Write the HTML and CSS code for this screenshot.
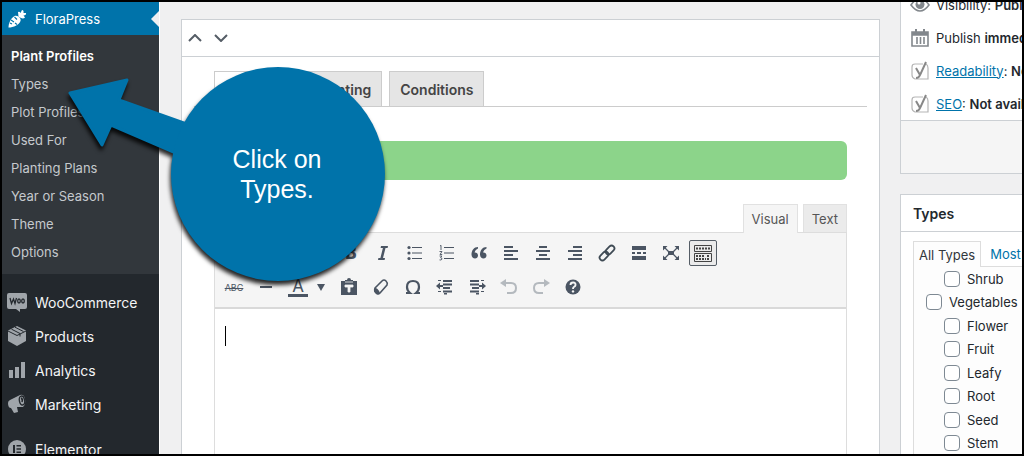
FILE: index.html
```html
<!DOCTYPE html>
<html lang="en">
<head>
<meta charset="utf-8">
<title>Plant Profiles – FloraPress</title>
<link rel="stylesheet" href="styles.css">
</head>
<body>
<div class="page">
  <nav class="menu" aria-label="Main menu">
    <a class="menu-item current" href="#">
      <svg class="menu-icon" viewBox="0 0 20 20" fill="currentColor"><path d="M1.500 18.500C1.500 14 4 9 7.500 7c3-1.500 7 2 6 5-1.500 4-7 6.500-12 6.500z"/><path d="M11.500 7.500L11 3q1.500-1 2.500 1L15 1q2 0 1.500 3L19 4q.5 2-2.500 2.500l1.500 2q-1.500 1.500-4 .5z"/><path d="M4 11l3 2M7.500 8l2.500 2.500M8 14l2 1.500M3 14l2 1" stroke="#0073aa" stroke-width="1.100"/></svg>
      <span>FloraPress</span>
    </a>
    <div class="submenu">
      <a class="active" href="#">Plant Profiles</a>
      <a href="#">Types</a>
      <a href="#">Plot Profiles</a>
      <a href="#">Used For</a>
      <a href="#">Planting Plans</a>
      <a href="#">Year or Season</a>
      <a href="#">Theme</a>
      <a href="#">Options</a>
    </div>
    <div class="menu-group">
      <a class="menu-item" href="#">
        <svg class="menu-icon" viewBox="0 0 20 20"><path fill="#a0a5aa" d="M2 1h16q2 0 2 2v12q0 2-2 2h-5v3l-4-3H2q-2 0-2-2V3q0-2 2-2z"/><path d="M3 6l1.500 5.500L6.500 7l1.500 4.500L9.500 6" fill="none" stroke="#23282d" stroke-width="1.300"/><ellipse cx="12" cy="9" rx="1.300" ry="2" fill="none" stroke="#23282d" stroke-width="1.300"/><ellipse cx="16" cy="9" rx="1.300" ry="2" fill="none" stroke="#23282d" stroke-width="1.300"/></svg>
        <span>WooCommerce</span>
      </a>
      <a class="menu-item" href="#">
        <svg class="menu-icon" viewBox="0 0 20 20"><path fill="#a0a5aa" d="M10 0l9 4.500v10.500L10 20l-9-5V4.500z"/><path d="M1 5l9 4.500L19 5M4.500 3.200l8.500 4.300v3M8 1.200l8.500 4.300" fill="none" stroke="#23282d"/></svg>
        <span>Products</span>
      </a>
      <a class="menu-item" href="#">
        <svg class="menu-icon" viewBox="0 0 20 20" fill="#a0a5aa"><path d="M2 10h4v8H2zM8 7h4v11H8zM14 2h4v16h-4z"/></svg>
        <span>Analytics</span>
      </a>
      <a class="menu-item" href="#">
        <svg class="menu-icon" viewBox="0 0 20 20"><path fill="#a0a5aa" d="M1 9q0-2 2-3l10-5q4-1 5 4t-2 8l-6 0 1 5-4 1-3-5q-3 0-3-5z"/><ellipse cx="15" cy="6.500" rx="2.600" ry="4.500" transform="rotate(-12 15 6.500)" fill="#a0a5aa" stroke="#23282d" stroke-width="1.400"/><path d="M14 4q2 1 1 4" fill="none" stroke="#23282d" stroke-width="1.500"/></svg>
        <span>Marketing</span>
      </a>
    </div>
    <a class="menu-item" href="#">
      <svg class="menu-icon" viewBox="0 0 20 20"><circle cx="10" cy="10" r="9" fill="#a0a5aa"/><path d="M6 6h2v8H6zM9.500 6H14v1.600H9.500zM9.500 9.200H14v1.600H9.500zM9.500 12.400H14V14H9.500z" fill="#23282d"/></svg>
      <span>Elementor</span>
    </a>
  </nav>

  <main class="content">
    <section class="panel profile">
      <header class="panel-head order">
        <button aria-label="Move up"><svg viewBox="0 0 14 8"><path d="M1 7l6-6 6 6"/></svg></button>
        <button aria-label="Move down"><svg viewBox="0 0 14 8"><path d="M1 1l6 6 6-6"/></svg></button>
      </header>
      <div class="profile-body">
        <div class="tabs">
          <button class="tab selected" aria-label="Profile"></button>
          <button class="tab">Planting</button>
          <button class="tab">Conditions</button>
        </div>
        <div class="sheet">
          <div class="banner"></div>
          <div class="modes">
            <button class="mode on">Visual</button>
            <button class="mode">Text</button>
          </div>
          <div class="editor">
            <div class="toolbar">
              <div class="tools">
                <select class="format" aria-label="Format"><option></option></select>
                <button class="tool bold" aria-label="Bold">B</button>
                <button class="tool" aria-label="Italic"><svg viewBox="0 0 20 20"><path d="M8 3h7l-.4 2h-2.100l-2.500 10h2l-.4 2H5l.4-2h2l2.500-10H7.600z"/></svg></button>
                <button class="tool" aria-label="Bulleted list"><svg viewBox="0 0 20 20"><circle cx="4" cy="4.500" r="1.600"/><circle cx="4" cy="10" r="1.600"/><circle cx="4" cy="15.500" r="1.600"/><path d="M7 4h10v1H7zM7 9.500h10v1H7zM7 15h10v1H7z"/></svg></button>
                <button class="tool" aria-label="Numbered list"><svg viewBox="0 0 20 20"><path d="M7 4h10v1H7zM7 9.500h10v1H7zM7 15h10v1H7z"/><path d="M3 3l1-.7V7M2.500 8.500H5L3 11.500h2.200M2.500 13h2.300l-1.200 1.700q1.600 0 1.300 1.400t-2.400.8" fill="none" stroke="#4b5563" stroke-width=".9"/></svg></button>
                <button class="tool" aria-label="Quote"><svg viewBox="0 0 20 20"><path d="M9 4C5 4 2.500 7.500 2.500 11.500c0 5 6.500 5 6.500 1 0-2-1.500-3.200-3.400-3C5.900 7.500 7.500 6.200 9 5.500zM17.500 4C13.500 4 11 7.500 11 11.500c0 5 6.500 5 6.500 1 0-2-1.500-3.200-3.400-3 .3-2 1.900-3.300 3.400-4z"/></svg></button>
                <button class="tool" aria-label="Align left"><svg viewBox="0 0 20 20"><path d="M3 3h9v2H3zM3 7h14v2H3zM3 11h9v2H3zM3 15h14v2H3z"/></svg></button>
                <button class="tool" aria-label="Align center"><svg viewBox="0 0 20 20"><path d="M6 3h8v2H6zM3 7h14v2H3zM6 11h8v2H6zM3 15h14v2H3z"/></svg></button>
                <button class="tool" aria-label="Align right"><svg viewBox="0 0 20 20"><path d="M8 3h9v2H8zM3 7h14v2H3zM8 11h9v2H8zM3 15h14v2H3z"/></svg></button>
                <button class="tool" aria-label="Link"><svg viewBox="0 0 20 20"><g fill="none" stroke="#3f4a54" stroke-width="1.800"><rect x="8" y="4.200" width="10" height="5.600" rx="2.800" transform="rotate(-45 13 7)"/><rect x="2" y="10.200" width="10" height="5.600" rx="2.800" transform="rotate(-45 7 13)"/></g></svg></button>
                <button class="tool" aria-label="Read more"><svg viewBox="0 0 20 20"><path d="M3 3h14v4H3zM3 9h3v2H3zM8 9h4v2H8zM14 9h3v2h-3zM3 13h14v4H3z"/></svg></button>
                <button class="tool" aria-label="Fullscreen"><svg viewBox="0 0 20 20"><path d="M7 8h6v4H7zM2 3h4.500L2 7.500zM18 3v4.500L13.500 3zM2 17v-4.500L6.500 17zM18 17h-4.500l4.500-4.500z"/><path d="M3 4l5 5M17 4l-5 5M3 16l5-5M17 16l-5-5" stroke="#4b5563" stroke-width="1.300"/></svg></button>
                <button class="tool pressed" aria-label="Toolbar toggle" aria-pressed="true"><svg viewBox="0 0 20 20"><path d="M1.500 2.500h17v6h-17zM1.500 10.500h17v8h-17z" fill="none" stroke="#444"/><path d="M3 5.500h14M3 13h9M14 13h3M3 16h2M6 16h7M14 16h3" stroke="#444" stroke-width="2" stroke-dasharray="2 1"/></svg></button>
              </div>
              <div class="tools">
                <button class="tool strike" aria-label="Strikethrough">ABC</button>
                <button class="tool" aria-label="Horizontal line"><svg viewBox="0 0 20 20"><path d="M4 9h12v2H4z"/></svg></button>
                <button class="tool color" aria-label="Text color">A</button>
                <button class="tool more" aria-label="More colors"><svg viewBox="0 0 10 10"><path d="M1 2h8L5 9z"/></svg></button>
                <button class="tool" aria-label="Paste as text"><svg viewBox="0 0 20 20"><path d="M2 4h4V3h2q0-2 2-2t2 2h2v1h4v14H2z"/><path d="M6 5h8M6 8h8v2h-3v5H9v-5H6z" fill="#f5f5f5" stroke="#f5f5f5" stroke-width=".8"/></svg></button>
                <button class="tool" aria-label="Clear formatting"><svg viewBox="0 0 20 20"><path d="M4 11l7-7q2-2 4 0t1 4l-7 8q-2 2-4 0t-1-5z" fill="none" stroke="#4b5563" stroke-width="1.600"/><path d="M4 11q3 0 5 5l-2 1.500-4-3z"/></svg></button>
                <button class="tool" aria-label="Special character"><svg viewBox="0 0 20 20"><path d="M3 16h4q-3-2.500-3-6 0-6 6-6t6 6q0 3.500-3 6h4" fill="none" stroke="#4b5563" stroke-width="2.200"/></svg></button>
                <button class="tool" aria-label="Decrease indent"><svg viewBox="0 0 20 20"><path d="M3 3h3v1H3zM8 3h9v2H8zM8 6.500h9v2H8zM8 10h7v2H8zM3 14h3v1H3zM8 13.500h9v2H8zM9 16h3v1.500H9zM1 9l4-3.500v2.500h3v2H5v2.500z"/></svg></button>
                <button class="tool" aria-label="Increase indent"><svg viewBox="0 0 20 20"><path d="M14 3h3v1h-3zM3 3h9v2H3zM3 6.500h9v2H3zM5 10h7v2H5zM14 14h3v1h-3zM3 13.500h9v2H3zM9 16h3v1.500H9zM19 9l-4-3.500v2.500h-3v2h3v2.500z"/></svg></button>
                <button class="tool off" aria-label="Undo"><svg viewBox="0 0 20 20"><path d="M1 6l6-4v8z"/><path d="M6 6h6q5 0 5 5t-5 5H8" fill="none" stroke="#b4b9be" stroke-width="2"/></svg></button>
                <button class="tool off" aria-label="Redo"><svg viewBox="0 0 20 20"><path d="M19 6l-6-4v8z"/><path d="M14 6H8q-5 0-5 5t5 5h4" fill="none" stroke="#b4b9be" stroke-width="2"/></svg></button>
                <button class="tool" aria-label="Help"><svg viewBox="0 0 20 20"><circle cx="10" cy="10" r="7.500"/><path d="M7.500 8q0-2.500 2.600-2.500T12.500 8q0 1-1.300 1.800T10 12" fill="none" stroke="#f5f5f5" stroke-width="1.900"/><circle cx="10" cy="14.400" r="1.200" fill="#f5f5f5"/></svg></button>
              </div>
            </div>
            <div class="writing" contenteditable="true" role="textbox" aria-label="Content"><span class="caret"></span></div>
          </div>
        </div>
      </div>
    </section>

    <aside class="side">
      <section class="panel publish">
        <ul class="facts">
          <li><svg viewBox="0 0 20 20"><path d="M1 10q9-13 18 0-9 12-18 0z" fill="none" stroke="#82878c" stroke-width="1.600"/><circle cx="10" cy="9.500" r="4.500" fill="#82878c"/><circle cx="9" cy="8" r="1.500" fill="#fff"/></svg><span>Visibility: <b>Public</b></span></li>
          <li><svg viewBox="0 0 20 20"><path d="M2 4h16v14H2zM2 7h16M7 9v7M10.500 9v7M14 9v7" fill="none" stroke="#82878c" stroke-width="1.600"/><path d="M2 4h16v3H2zM5 1h2v4H5zM13 1h2v4h-2z" fill="#82878c"/></svg><span>Publish <b>immediately</b></span></li>
          <li><svg viewBox="0 0 20 20"><path d="M13 3H5Q2 3 2 6v8q0 3 3 4h13V7q0-3-2-4" fill="none" stroke="#b5b5b5" stroke-width="1.200"/><path d="M6 7l4 7M16 1l-6 13q-1 3-4 3" fill="none" stroke="#888" stroke-width="2"/></svg><span><a href="#">Readability</a>: <b>Not available</b></span></li>
          <li><svg viewBox="0 0 20 20"><path d="M13 3H5Q2 3 2 6v8q0 3 3 4h13V7q0-3-2-4" fill="none" stroke="#b5b5b5" stroke-width="1.200"/><path d="M6 7l4 7M16 1l-6 13q-1 3-4 3" fill="none" stroke="#888" stroke-width="2"/></svg><span><a href="#">SEO</a>: <b>Not available</b></span></li>
        </ul>
        <div class="actions"></div>
      </section>
      <section class="panel types">
        <h2 class="panel-head">Types</h2>
        <div class="types-body">
          <div class="type-tabs"><button class="type-tab on">All Types</button><button class="type-tab">Most Used</button></div>
          <ul class="checks">
            <li class="child"><label><input type="checkbox">Shrub</label></li>
            <li><label><input type="checkbox">Vegetables</label></li>
            <li class="child"><label><input type="checkbox">Flower</label></li>
            <li class="child"><label><input type="checkbox">Fruit</label></li>
            <li class="child"><label><input type="checkbox">Leafy</label></li>
            <li class="child"><label><input type="checkbox">Root</label></li>
            <li class="child"><label><input type="checkbox">Seed</label></li>
            <li class="child"><label><input type="checkbox">Stem</label></li>
          </ul>
        </div>
      </section>
    </aside>
  </main>

  <div class="callout">
    <svg class="callout-shape" viewBox="0 0 350 250" fill="#0073aa"><path d="M20 43l57-13-8 20 76 27-19 26-65-28-9 20z" stroke="#0073aa" stroke-width="3" stroke-linejoin="round"/><circle cx="228" cy="124" r="107"/></svg>
    <p class="callout-text">Click on<br>Types.</p>
  </div>
</div>
</body>
</html>
```
FILE: styles.css
```css
* { box-sizing: border-box; }
body { margin: 0; font-family: Inter, "Noto Sans", sans-serif; font-size: 13px; color: #23282d; }
button { font: inherit; color: inherit; margin: 0; padding: 0; border: 0; background: none; }
ul, h2, p { margin: 0; padding: 0; list-style: none; }

.page { position: relative; display: flex; height: 100vh; border: 2px solid #000; overflow: hidden; background: #f0f0f1; }

/* Left menu */
.menu { flex: none; width: 158px; background: #23282d; border-right: 1px solid #fff; }
.menu-item { display: flex; align-items: center; gap: 8px; height: 34px; padding-left: 5px; color: #f4f5f6; font-size: 14px; text-decoration: none; }
.menu-icon { flex: none; width: 20px; height: 20px; }
.menu-item.current { height: 33px; background: #0073aa; color: #fff; font-size: 13px; }
.menu-item.current::after { content: ""; margin-left: auto; border: 8px solid transparent; border-left: 0; border-right-color: #f0f0f1; }
.submenu { display: flex; flex-direction: column; padding: 7px 0 8px 9px; background: #32373c; }
.submenu a { line-height: 28px; color: #c5c9cd; text-decoration: none; white-space: nowrap; }
.submenu .active { color: #fff; font-weight: 600; }
.menu-group { padding: 11px 0; }

/* Panels */
.content { flex: 1; min-width: 0; display: flex; gap: 20px; padding-left: 21px; }
.panel { border: 1px solid #ccd0d4; background: #fff; }
.panel-head { display: flex; align-items: center; height: 37px; border-bottom: 1px solid #ccd0d4; }
.profile { flex: 1; min-width: 0; display: flex; flex-direction: column; margin-top: 17px; border-bottom: 0; }
.order { gap: 12px; padding-left: 6px; }
.order button { display: flex; }
.order svg { width: 14px; height: 8px; fill: none; stroke: #555d66; stroke-width: 2; }
.profile-body { flex: 1; display: flex; flex-direction: column; padding: 14px 12px 0; }
.tabs { display: flex; gap: 7px; padding: 0 20px; border-bottom: 1px solid #ccc; }
.tab { height: 35px; padding: 0 10px; border: 1px solid #ccc; border-bottom: 0; background: #e5e5e5; font-size: 14px; font-weight: 600; color: #444; }
.tab.selected { width: 84px; background: #fff; }
.sheet { flex: 1; display: flex; flex-direction: column; padding: 34px 20px 0; }
.banner { height: 39px; border-radius: 6px; background: #8cd48a; }

/* Editor */
.modes { display: flex; justify-content: flex-end; gap: 5px; margin-top: 24px; }
.mode { height: 28px; padding: 0 8px; border: 1px solid #e1e1e1; border-bottom: 0; background: #ebebeb; color: #555; }
.mode.on { height: 29px; margin-bottom: -1px; background: #f5f5f5; z-index: 1; }
.editor { flex: 1; display: flex; flex-direction: column; border: 1px solid #ddd; border-bottom: 0; }
.toolbar { display: flex; flex-direction: column; gap: 6px; padding: 6px 5px; background: #f5f5f5; border-bottom: 2px solid #d9d9d9; }
.tools { display: flex; align-items: center; gap: 4px; height: 28px; }
.tool { display: flex; flex: none; align-items: center; justify-content: center; width: 28px; height: 26px; color: #4b5563; }
.tool svg { width: 20px; height: 20px; fill: #4b5563; }
.tool.off svg { fill: #b4b9be; }
.tool.pressed { border: 1px solid #555d66; border-radius: 2px; background: #ebebeb; }
.bold { font-weight: 800; font-size: 17px; }
.strike { font-size: 9px; text-decoration: line-through; }
.color { height: 20px; width: 20px; margin: 0 4px; border-bottom: 3px solid #4b5563; font-size: 17px; }
.more { width: 10px; margin-right: 5px; }
.more svg { width: 10px; height: 10px; }
.format { width: 108px; height: 22px; margin-right: 5px; border: 1px solid #ddd; background: #fff; }
.writing { flex: 1; padding: 17px 10px; outline: 0; }
.caret { display: block; width: 1px; height: 20px; background: #000; }

/* Right column */
.side { flex: none; width: 122px; white-space: nowrap; overflow: hidden; }
.side .panel { border-right: 0; }
.publish { margin-top: -15px; }
.facts li { display: flex; align-items: center; gap: 6px; height: 33px; padding-left: 9px; }
.facts svg { flex: none; width: 20px; height: 20px; }
.facts a { color: #0073aa; }
.facts b { font-weight: 600; }
.actions { height: 53px; border-top: 1px solid #ccd0d4; background: #f5f5f5; }
.types { margin-top: 20px; }
h2.panel-head { padding-left: 12px; font-size: 14px; font-weight: 600; }
.types-body { padding: 9px 0 0 12px; }
.type-tabs { display: flex; }
.type-tab { height: 26px; padding: 0 9px; color: #0073aa; border-bottom: 1px solid #ddd; }
.type-tab.on { padding: 0 5px; color: #32373c; border: 1px solid #ddd; border-bottom: 0; background: #fdfdfd; }
.checks { border-left: 1px solid #ddd; background: #fdfdfd; padding-left: 12px; }
.checks li { height: 23px; }
.checks li:nth-child(even) { height: 24px; }
.checks .child { padding-left: 18px; }
.checks label { display: flex; align-items: center; gap: 7px; height: 100%; }
.checks input { appearance: none; flex: none; width: 16px; height: 16px; margin: 0; border: 1px solid #7e8993; border-radius: 4px; background: #fff; }

/* Callout over the page */
.callout { position: absolute; left: 48px; top: 48px; width: 350px; height: 250px; }
.callout-shape { width: 100%; height: 100%; filter: drop-shadow(-1px 4px 2px rgba(0, 0, 0, .85)); }
.callout-text { position: absolute; left: 120px; top: 94px; width: 214px; text-align: center; color: #fff; font: 25px/30px "Liberation Sans", sans-serif; }
```
